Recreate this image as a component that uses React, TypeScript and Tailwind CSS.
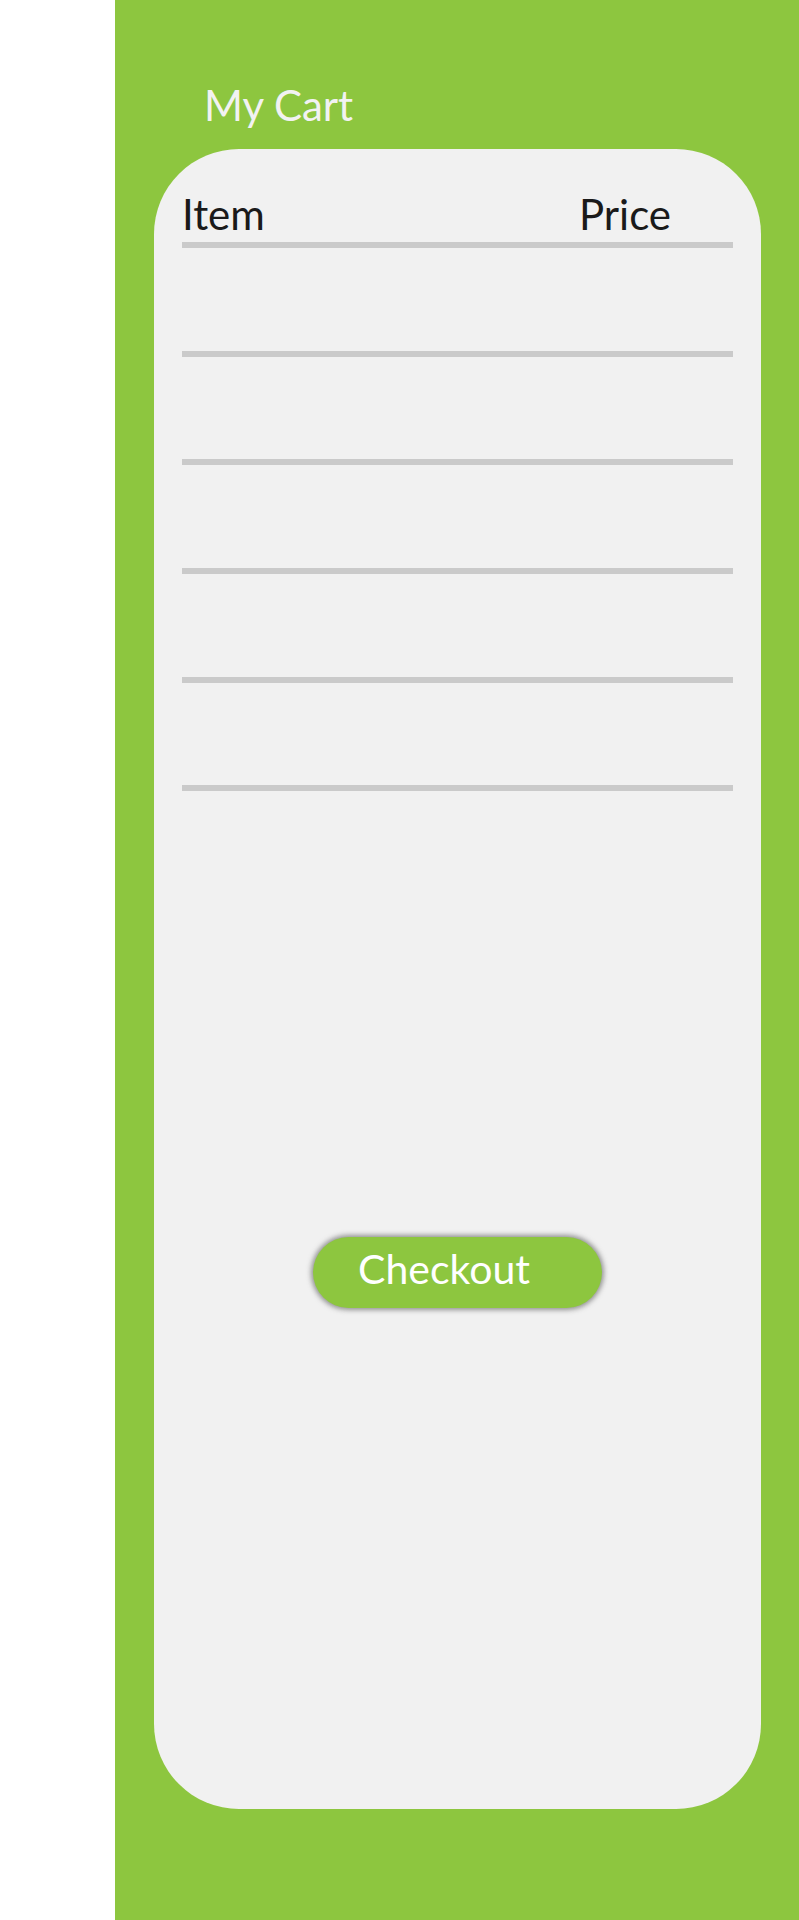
import React from 'react';

const rows = [0, 1, 2, 3, 4];

export default function App() {
  return (
    <div className="flex h-[1920px] w-full bg-white font-['Lato','Open_Sans',sans-serif]">
      <div className="w-[115px] shrink-0 bg-white" />
      <div className="flex flex-1 flex-col bg-[#8dc63f] pt-[84px]">
        <h1 className="ml-[89px] text-[42px] font-normal leading-[42px] text-[#f2f2f2]">
          My Cart
        </h1>

        <div className="mt-[23px] ml-[39px] mr-[38px] flex h-[1660px] flex-col rounded-[85px] bg-[#f1f1f1] px-[28px] pt-[44px]">
          <div className="flex justify-between pr-[62px] text-[42px] font-normal leading-[42px] text-[#1a1a1a]">
            <span>Item</span>
            <span>Price</span>
          </div>
          <div className="mt-[7px] h-[6px] bg-[#cacaca]" />
          {rows.map((r) => (
            <div key={r} className="mt-[102.7px] h-[6px] bg-[#cacaca]" />
          ))}

          <div className="mt-[446px] flex justify-center">
            <button className="flex h-[71px] w-[289px] items-start rounded-full bg-[#8dc63f] pl-[45px] pt-[10.6px] text-[41px] font-normal leading-[41px] text-white shadow-[0_0_5px_2px_rgba(70,70,70,0.55)]">
              Checkout
            </button>
          </div>
        </div>
      </div>
    </div>
  );
}
